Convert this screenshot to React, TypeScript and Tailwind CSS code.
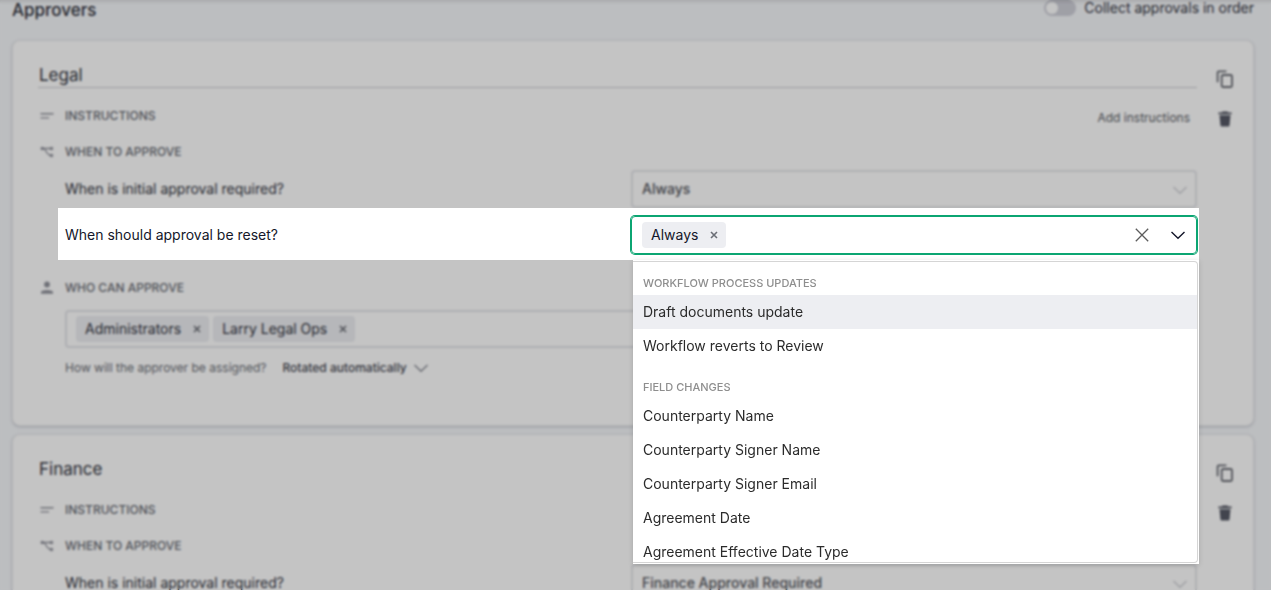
import { useState } from 'react';
import type { ReactNode } from 'react';

const groups = [
  {
    name: 'Workflow process updates',
    options: ['Draft documents update', 'Workflow reverts to Review'],
  },
  {
    name: 'Field changes',
    options: [
      'Counterparty Name',
      'Counterparty Signer Name',
      'Counterparty Signer Email',
      'Agreement Date',
      'Agreement Effective Date Type',
    ],
  },
];

function ChevronIcon() {
  return (
    <svg width="16" height="16" viewBox="0 0 16 16" fill="none" stroke="currentColor" strokeWidth="1.4">
      <path d="M1.500 5 8 11.200 14.500 5" />
    </svg>
  );
}

function CopyIcon() {
  return (
    <svg width="18" height="18" viewBox="0 0 18 18" fill="none" stroke="currentColor" strokeWidth="1.8">
      <path d="M1.600 12.200V2.800C1.600 2.100 2 1.400 2.800 1.400h7.600" />
      <rect x="5.700" y="5" width="10.300" height="12" rx="1.400" />
    </svg>
  );
}

function TrashIcon() {
  return (
    <svg width="16" height="16" viewBox="0 0 16 16" fill="currentColor">
      <path d="M5.500.6h5l.7 1h3.400v1.600H1.400V1.600h3.400zM2.500 4.200h11l-.9 9.700c-.1 1-.7 1.500-1.600 1.500H5c-.9 0-1.500-.5-1.600-1.500z" />
    </svg>
  );
}

function LinesIcon() {
  return (
    <svg width="14" height="14" viewBox="0 0 14 14" fill="none" stroke="currentColor" strokeWidth="1.4">
      <path d="M.5 4.700h13M.5 8.900h8.500" />
    </svg>
  );
}

function BranchIcon() {
  return (
    <svg width="14" height="14" viewBox="0 0 14 14" fill="none" stroke="currentColor" strokeWidth="1.3">
      <path d="M1.500 3.500h10M4 3.500c2 1 2.500 7 7 7" />
      <path d="M1 2.300h2.400v2.400H1zM10.300 2.300h2.400v2.400h-2.400zM10.300 9.300h2.400v2.400h-2.400z" fill="currentColor" strokeWidth=".6" />
    </svg>
  );
}

function PersonIcon() {
  return (
    <svg width="14" height="14" viewBox="0 0 14 14" fill="currentColor">
      <circle cx="7" cy="3.500" r="2.900" />
      <path d="M1 12.800v-1.600c0-1.200 2.200-2.200 6-2.200s6 1 6 2.200v1.600z" />
    </svg>
  );
}

function SectionTitle({ icon, children }: { icon: ReactNode; children: ReactNode }) {
  return (
    <h3 className="flex h-9 items-center text-xs font-medium text-[#6b6e76] uppercase">
      <span className="flex w-[27px] shrink-0 pl-0.5 text-[#92949d]">{icon}</span>
      {children}
    </h3>
  );
}

function Tag({ label }: { label: string }) {
  return (
    <span className="flex h-[26px] items-center rounded-sm bg-[#edeef2] pl-[9px] text-sm">
      {label}
      <button type="button" aria-label={`Remove ${label}`} className="flex h-full w-7 items-center justify-center pl-1 text-[#6b6e76]">
        <svg width="8" height="8" viewBox="0 0 8 8" stroke="currentColor" strokeWidth="1.6">
          <path d="M1 1l6 6M7 1L1 7" />
        </svg>
      </button>
    </span>
  );
}

function InitialApproval({ id, value }: { id: string; value: string }) {
  return (
    <div className="ml-[27px] grid grid-cols-2 items-center text-sm text-[#33353f]">
      <label htmlFor={id}>When is initial approval required?</label>
      <div className="relative">
        <select id={id} className="h-[38px] w-full appearance-none rounded border-2 border-[#e6e7eb] bg-white px-[9px] font-medium text-[#565860]">
          <option>{value}</option>
        </select>
        <span className="pointer-events-none absolute top-3 right-[9px] text-[#cfd0d5]">
          <ChevronIcon />
        </span>
      </div>
    </div>
  );
}

function ResetApproval() {
  const [active, setActive] = useState('Draft documents update');

  return (
    <div className="relative z-20 -mr-0.5 ml-5 bg-white pt-2 pr-0.5 pb-1.5 pl-[7px] text-sm text-[#14172a]">
      <div className="grid grid-cols-2 items-center">
        <label htmlFor="reset">When should approval be reset?</label>
        <div className="relative">
          <div className="flex h-[38px] items-center rounded border border-[#0ba572] pl-2.5 ring-1 ring-[#0ba572]">
            <Tag label="Always" />
            <input id="reset" role="combobox" aria-expanded="true" aria-controls="reset-options" className="h-full min-w-0 flex-1 px-2 outline-none" />
            <button type="button" aria-label="Clear" className="flex w-9 justify-center text-[#5c5c5c]">
              <svg width="14" height="14" viewBox="0 0 14 14" stroke="currentColor" strokeWidth="1.3">
                <path d="M.8.8l12.400 12.400M13.200.8L.8 13.200" />
              </svg>
            </button>
            <button type="button" aria-label="Toggle options" className="flex w-9 justify-center">
              <ChevronIcon />
            </button>
          </div>

          <div className="absolute top-11 -right-0.5 left-0.5 bg-white py-px pr-px shadow-[0_1px_5px_rgba(0,0,0,0.15)]">
            <ul id="reset-options" role="listbox" className="h-[302px] overflow-hidden rounded-r border-y border-r border-[#d5d5d5] text-[#2b2b2b]">
              {groups.map(group => (
                <li key={group.name} role="group" aria-label={group.name} className="pt-[11px] not-first:pt-3.5">
                  <div className="flex h-[22px] items-center px-2.5 text-[11px] font-medium text-[#8e8e8e] uppercase">
                    {group.name}
                  </div>
                  <ul>
                    {group.options.map(option => (
                      <li
                        key={option}
                        role="option"
                        aria-selected={option === active}
                        onMouseEnter={() => setActive(option)}
                        className={`flex h-[34px] items-center px-2.5 ${option === active ? 'bg-[#edeef2]' : ''}`}
                      >
                        {option}
                      </li>
                    ))}
                  </ul>
                </li>
              ))}
            </ul>
          </div>
        </div>
      </div>
    </div>
  );
}

interface CardProps {
  name: string;
  underlined?: boolean;
  addInstructions?: boolean;
  children: ReactNode;
}

function ApproverCard({ name, underlined, addInstructions, children }: CardProps) {
  return (
    <section className="flex rounded-lg border border-[#eaebee] bg-white pl-[25px] shadow-[0_1px_3px_rgba(30,35,60,0.2)]">
      <div className="min-w-0 flex-1 pt-[23px] pb-[45px]">
        <input
          aria-label="Approver group name"
          defaultValue={name}
          className={`mb-2.5 block h-6 w-full border-b pl-px text-[17px] text-[#33353f] outline-none ${underlined ? 'border-[#cfd0d4]' : 'border-transparent'}`}
        />
        <div className="flex items-center justify-between">
          <SectionTitle icon={<LinesIcon />}>Instructions</SectionTitle>
          {addInstructions && (
            <button type="button" className="pt-1 pr-[7px] text-xs text-[#5b5e66]">
              Add instructions
            </button>
          )}
        </div>
        <SectionTitle icon={<BranchIcon />}>When to approve</SectionTitle>
        {children}
      </div>
      <div className="flex w-14 shrink-0 flex-col items-center pt-[18px] text-[#6b6e76]">
        <button type="button" aria-label="Duplicate" className="flex size-10 items-center justify-center">
          <CopyIcon />
        </button>
        <button type="button" aria-label="Delete" className="flex size-10 items-center justify-center text-[#565966]">
          <TrashIcon />
        </button>
      </div>
    </section>
  );
}

export default function App() {
  return (
    <main className="relative h-screen overflow-hidden bg-[#f5f7fa] pr-[17px] pl-3 font-['Inter',sans-serif] text-[#33353f]">
      <div className="absolute inset-x-0 top-0 h-1 bg-linear-to-b from-black/10 to-transparent" />
      <header className="flex h-10 items-start justify-between">
        <h1 className="text-[17px] leading-5 font-medium">Approvers</h1>
        <label className="flex items-center gap-2 text-sm leading-[14px]">
          <input
            type="checkbox"
            className="h-4 w-8 appearance-none rounded-full bg-[#cfd0d9] before:m-0.5 before:block before:size-3 before:rounded-full before:bg-white"
          />
          Collect approvals in order
        </label>
      </header>

      <div className="space-y-2">
        <ApproverCard name="Legal" underlined addInstructions>
          <InitialApproval id="legal-initial" value="Always" />
          <ResetApproval />
          <div className="mt-2.5">
            <SectionTitle icon={<PersonIcon />}>Who can approve</SectionTitle>
          </div>
          <div className="mt-1 ml-[27px] flex h-[38px] items-center gap-1 rounded border-2 border-[#e4e5e9] pl-[9px]">
            <Tag label="Administrators" />
            <Tag label="Larry Legal Ops" />
          </div>
          <div className="mt-2 ml-[27px] flex h-6 items-center text-xs">
            <label htmlFor="assignment" className="text-[#6b6e76]">
              How will the approver be assigned?
            </label>
            <select id="assignment" className="ml-4 appearance-none font-medium text-[#464852]">
              <option>Rotated automatically</option>
            </select>
            <span className="pointer-events-none ml-1.5 text-[#8b8e97]">
              <ChevronIcon />
            </span>
          </div>
        </ApproverCard>

        <ApproverCard name="Finance">
          <InitialApproval id="finance-initial" value="Finance Approval Required" />
        </ApproverCard>
      </div>

      <div className="pointer-events-none absolute inset-0 z-10 bg-black/23 backdrop-blur-[1px]" />
    </main>
  );
}
